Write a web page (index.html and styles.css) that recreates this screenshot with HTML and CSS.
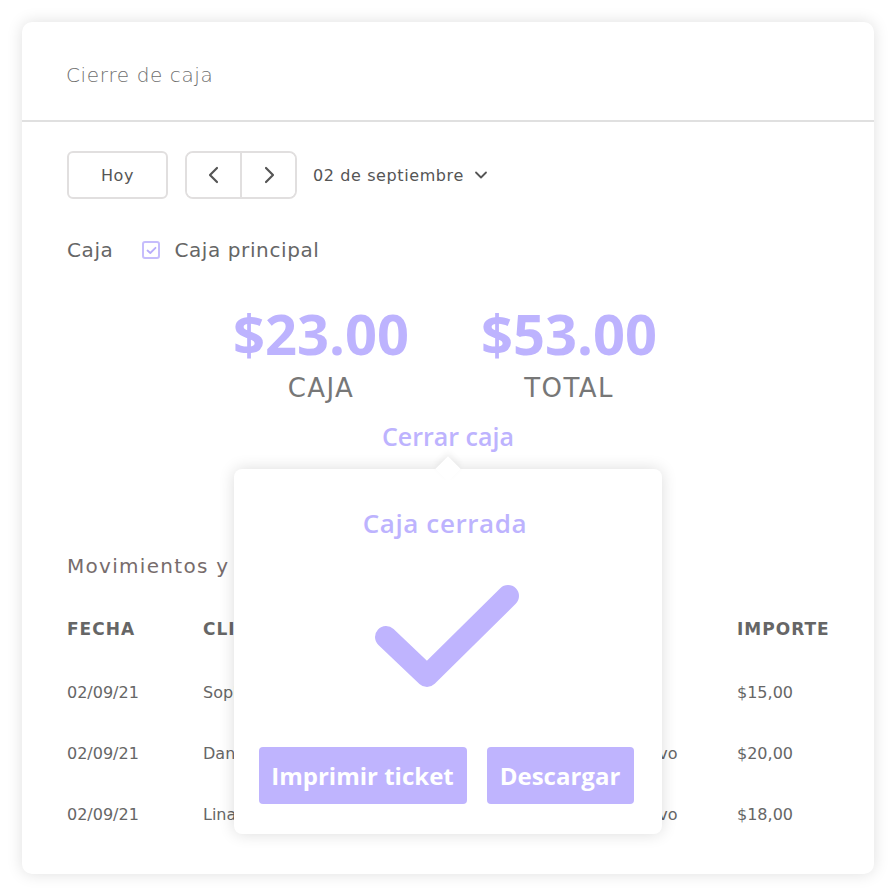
FILE: index.html
```html
<!DOCTYPE html>
<html lang="es">
<head>
<meta charset="utf-8">
<title>Cierre de caja</title>
<link rel="stylesheet" href="styles.css">
</head>
<body>
<div class="card">
  <header class="card-header">Cierre de caja</header>
  <div class="card-body">
    <div class="toolbar">
      <button class="btn-outline btn-today">Hoy</button>
      <div class="nav-group">
        <button class="nav-btn" aria-label="Anterior">
          <svg width="14" height="20" viewBox="0 0 14 20"><path d="M10 3 L3 10 L10 17" fill="none" stroke="#555" stroke-width="2.2" stroke-linecap="round" stroke-linejoin="round"/></svg>
        </button>
        <button class="nav-btn" aria-label="Siguiente">
          <svg width="14" height="20" viewBox="0 0 14 20"><path d="M4 3 L11 10 L4 17" fill="none" stroke="#555" stroke-width="2.2" stroke-linecap="round" stroke-linejoin="round"/></svg>
        </button>
      </div>
      <div class="date-select">
        <span>02 de septiembre</span>
        <svg width="14" height="10" viewBox="0 0 14 10"><path d="M2 2.5 L7 7.5 L12 2.5" fill="none" stroke="#555" stroke-width="1.8" stroke-linecap="round" stroke-linejoin="round"/></svg>
      </div>
    </div>

    <div class="caja-row">
      <span class="caja-label">Caja</span>
      <span class="checkbox">
        <svg width="11" height="9" viewBox="0 0 11 9"><path d="M1.5 4.5 L4.3 7 L9.5 1.8" fill="none" stroke="#b8adfb" stroke-width="1.8" stroke-linecap="round" stroke-linejoin="round"/></svg>
      </span>
      <span class="caja-name">Caja principal</span>
    </div>

    <div class="totals">
      <div class="total">
        <div class="amount">$23.00</div>
        <div class="amount-label">CAJA</div>
      </div>
      <div class="total">
        <div class="amount">$53.00</div>
        <div class="amount-label">TOTAL</div>
      </div>
    </div>

    <div class="close-link">Cerrar caja</div>

    <h2 class="section-title">Movimientos y pagos</h2>

    <div class="table">
      <div class="th">FECHA</div><div class="th">CLIENTE</div><div class="th">PAGO</div><div class="th">IMPORTE</div>
      <div class="td">02/09/21</div><div class="td">Sophia Martínez</div><div class="td">Tarjeta</div><div class="td">$15,00</div>
      <div class="td">02/09/21</div><div class="td">Daniel López</div><div class="td">En efectivo</div><div class="td">$20,00</div>
      <div class="td">02/09/21</div><div class="td">Lina García</div><div class="td">En efectivo</div><div class="td">$18,00</div>
    </div>
  </div>

  <div class="popover">
    <div class="popover-title">Caja cerrada</div>
    <svg class="check" width="170" height="130" viewBox="0 0 170 130">
      <path d="M26 52 L67 91 L148 11" fill="none" stroke="#bfb4fe" stroke-width="22" stroke-linecap="round" stroke-linejoin="round"/>
    </svg>
    <div class="popover-actions">
      <button class="btn-primary btn-print">Imprimir ticket</button>
      <button class="btn-primary btn-download">Descargar</button>
    </div>
  </div>
</div>
</body>
</html>
```

FILE: styles.css
```css
* { box-sizing: border-box; }

html, body {
  margin: 0;
  background: #ffffff;
}

body {
  padding: 22px;
  font-family: "DejaVu Sans", "Open Sans", sans-serif;
  color: #6f6f6f;
}

.card {
  position: relative;
  width: 852px;
  height: 852px;
  background: #fff;
  border-radius: 10px;
  box-shadow: 0 0 16px rgba(0, 0, 0, 0.13);
  overflow: hidden;
}

.card-header {
  height: 100px;
  padding-left: 44px;
  padding-top: 8px;
  display: flex;
  align-items: center;
  font-size: 20px;
  letter-spacing: 0.6px;
  font-family: "DejaVu Sans ExtraLight", "DejaVu Sans", sans-serif;
  font-weight: 200;
  color: #6f6f6f;
  border-bottom: 2px solid #e0e0e0;
}

.card-body {
  padding: 29px 45px 0 45px;
}

.toolbar {
  display: flex;
  align-items: center;
}

button {
  font-family: inherit;
  cursor: pointer;
}

.btn-outline {
  width: 101px;
  height: 48px;
  border: 2px solid #e1dfdf;
  border-radius: 6px;
  background: #fff;
  font-size: 16px;
  letter-spacing: 0.6px;
  color: #555;
}

.nav-group {
  margin-left: 17px;
  display: flex;
  width: 112px;
  height: 48px;
  border: 2px solid #e1dfdf;
  border-radius: 8px;
  overflow: hidden;
}

.nav-btn {
  flex: 1;
  border: none;
  background: #fff;
  display: flex;
  align-items: center;
  justify-content: center;
  padding: 0;
}

.nav-btn + .nav-btn {
  border-left: 2px solid #e1dfdf;
}

.date-select {
  margin-left: 16px;
  display: flex;
  align-items: center;
  gap: 10px;
  font-size: 16px;
  letter-spacing: 0.6px;
  color: #555;
}

.caja-row {
  margin-top: 39px;
  display: flex;
  align-items: center;
  font-size: 20px;
  letter-spacing: 0.6px;
  color: #666;
}

.checkbox {
  margin-left: 29px;
  width: 18px;
  height: 18px;
  border: 2px solid #c6bdfc;
  border-radius: 3px;
  display: inline-flex;
  align-items: center;
  justify-content: center;
}

.caja-name {
  margin-left: 14px;
}

.totals {
  margin-top: 40px;
  display: flex;
  justify-content: center;
  gap: 72px;
  padding-right: 6px;
}

.total {
  display: flex;
  flex-direction: column;
  align-items: center;
}

.amount {
  font-family: "Open Sans", sans-serif;
  font-size: 56px;
  font-weight: 700;
  color: #bdb3fe;
  line-height: 62px;
}

.amount-label {
  margin-top: 8px;
  font-size: 26px;
  letter-spacing: 1.4px;
  color: #777;
  line-height: 32px;
}

.close-link {
  margin-top: 16px;
  text-align: center;
  font-family: "Open Sans", sans-serif;
  font-size: 25px;
  font-weight: 600;
  color: #bdb3fe;
  line-height: 32px;
}

.section-title {
  margin: 100px 0 0 0;
  font-size: 20px;
  font-weight: 400;
  letter-spacing: 1.3px;
  color: #776c6c;
  line-height: 28px;
}

.table {
  margin-top: 39px;
  display: grid;
  grid-template-columns: 136px 385px 149px 92px;
  grid-template-rows: 64px repeat(3, 61px);
  align-items: start;
}

.th {
  font-size: 17px;
  font-weight: 700;
  letter-spacing: 1px;
  color: #666;
  line-height: 20px;
  white-space: nowrap;
}

.td {
  font-size: 16px;
  color: #666;
  line-height: 20px;
  white-space: nowrap;
}

.popover {
  position: absolute;
  left: 212px;
  top: 447px;
  width: 428px;
  height: 365px;
  background: #fff;
  border-radius: 8px;
  box-shadow: 0 0 16px rgba(0, 0, 0, 0.14);
  display: flex;
  flex-direction: column;
  align-items: center;
  padding-top: 38px;
}

.popover::before {
  content: "";
  position: absolute;
  top: -9px;
  left: 205px;
  width: 18px;
  height: 18px;
  background: #fff;
  transform: rotate(45deg);
  box-shadow: -3px -3px 6px rgba(0, 0, 0, 0.06);
}

.popover-title {
  position: relative;
  font-family: "Open Sans", sans-serif;
  font-size: 26px;
  font-weight: 600;
  letter-spacing: 0.6px;
  color: #bdb3fe;
  line-height: 32px;
  padding-right: 6px;
}

.check {
  margin-top: 46px;
  margin-left: -6px;
}

.popover-actions {
  margin-top: 32px;
  display: flex;
  gap: 20px;
  padding-right: 4px;
}

.btn-primary {
  height: 57px;
  border: none;
  border-radius: 4px;
  background: #bfb4fe;
  color: #fff;
  font-family: "Open Sans", sans-serif;
  font-size: 24px;
  font-weight: 700;
  padding: 0;
  white-space: nowrap;
}

.btn-print { width: 208px; }
.btn-download { width: 147px; }
```
